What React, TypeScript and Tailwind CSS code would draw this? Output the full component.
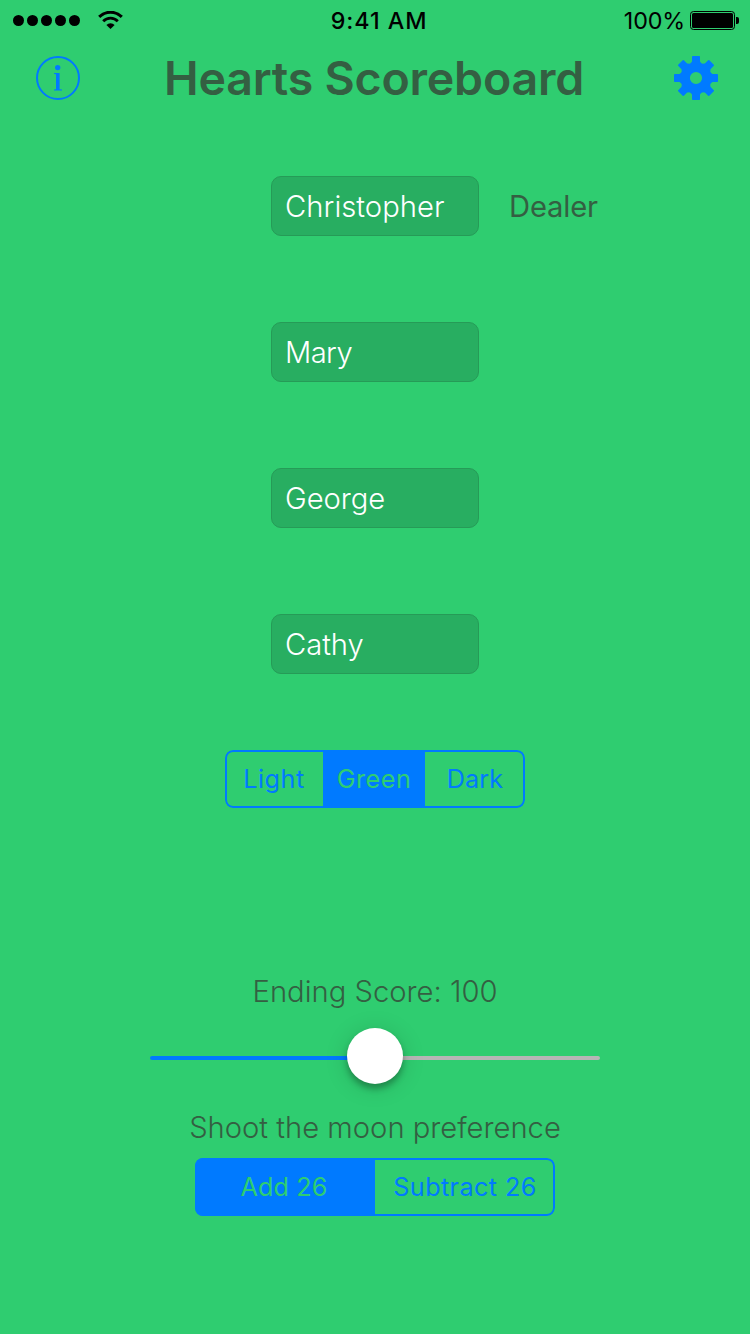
import clsx from "clsx";

function StatusBar() {
  return (
    <div className="flex h-10 w-full items-center justify-between pr-[11px] pl-[13px] text-[23.3px] leading-none text-black">
      <div className="flex w-[306px] items-center gap-[18px] pt-px">
        <div className="flex gap-[3px]">
          {[0, 1, 2, 3, 4].map((i) => (
            <span key={i} className="size-[11px] rounded-full bg-black" />
          ))}
        </div>
        <svg className="mb-px h-[18px] w-[25px]" viewBox="0 0 25 18" fill="none" stroke="#000">
          <path d="M1.2 5.9a16 16 0 0 1 22.6 0" strokeWidth="3" />
          <path d="M5.2 10.3a10.2 10.2 0 0 1 14.6 0" strokeWidth="2.8" />
          <path d="M12.5 17.9 8.4 13.9a5.8 5.8 0 0 1 8.2 0Z" fill="#000" stroke="none" />
        </svg>
      </div>
      <span className="pt-px font-medium tracking-[0.95px] whitespace-nowrap">9:41 AM</span>
      <div className="flex w-[300px] items-center justify-end gap-[5px] pt-px">
        <span className="tracking-[-0.15px]">100%</span>
        <svg className="h-[19px] w-[49px]" viewBox="0 0 49 19">
          <rect x="0.5" y="0.5" width="44" height="18" rx="3" fill="none" stroke="#000" />
          <rect x="2" y="2" width="41" height="15" rx="1.5" fill="#000" />
          <path d="M46 6h1a2 2 0 0 1 2 2v3a2 2 0 0 1-2 2h-1Z" fill="#000" />
        </svg>
      </div>
    </div>
  );
}

function InfoIcon() {
  return (
    <svg className="size-11" viewBox="0 0 44 44">
      <circle cx="22" cy="22" r="21" fill="none" stroke="#007aff" strokeWidth="2" />
      <circle cx="21.7" cy="11.6" r="2.7" fill="#007aff" />
      <path d="M18 17h5.6v16.2l2.4.3V34.4h-8v-.9l2-.3V18.3L18 18Z" fill="#007aff" />
    </svg>
  );
}

function GearIcon() {
  return (
    <svg className="size-11" viewBox="-22 -22 44 44" fill="#007aff">
      <circle r="10.8" fill="none" stroke="#007aff" strokeWidth="9.4" />
      {[0, 45, 90, 135, 180, 225, 270, 315].map((a) => (
        <path key={a} d="M-4-21.2Q-4-22-3.2-22H3.2Q4-22 4-21.2V-16.5L6-14H-6L-4-16.5Z" transform={`rotate(${a})`} />
      ))}
    </svg>
  );
}

interface Segment {
  label: string;
  className: string;
}

function SegmentedControl({ segments, selected, className }: { segments: Segment[]; selected: number; className: string }) {
  return (
    <div className={clsx("relative flex h-[58px] overflow-hidden rounded-[8px] text-[25.2px] leading-none", className)}>
      {segments.map((s, i) => (
        <button
          key={s.label}
          className={clsx(
            "flex items-center justify-center pt-[2px] font-[370] whitespace-nowrap",
            s.className,
            i === selected ? "bg-[#007aff] text-[#2fcd70]" : "text-[#007aff]",
          )}
        >
          {s.label}
        </button>
      ))}
      <span className="pointer-events-none absolute inset-0 rounded-[8px] border-2 border-[#007aff]" />
    </div>
  );
}

const players = [
  { name: "Christopher", tracking: "tracking-[0.05px]", dealer: true },
  { name: "Mary", tracking: "tracking-[-0.6px]", dealer: false },
  { name: "George", tracking: "tracking-[-0.05px]", dealer: false },
  { name: "Cathy", tracking: "tracking-[-0.05px]", dealer: false },
];

export default function App() {
  return (
    <div className="flex h-[1334px] w-[750px] flex-col items-center overflow-hidden bg-[#2fcd70] font-['Inter',sans-serif] text-[#345f42]">
      <StatusBar />
      <header className="flex h-[76px] w-full items-center justify-between pr-8 pl-9">
        <InfoIcon />
        <h1 className="mr-[6px] text-[46.5px] leading-none font-semibold tracking-[-0.2px] whitespace-nowrap">Hearts Scoreboard</h1>
        <GearIcon />
      </header>

      <div className="mt-[60px] flex w-full flex-col gap-[86px] pl-[271px] text-[29.2px] leading-none">
        {players.map((p) => (
          <div key={p.name} className="flex items-center">
            <div className="flex h-[60px] w-[208px] items-center rounded-[10px] border border-[#269b57] bg-[#28ae61] pt-px pl-[13px] font-light text-white">
              <span className={p.tracking}>{p.name}</span>
            </div>
            {p.dealer && <span className="ml-[30px] pt-px font-[370] tracking-[-0.15px]">Dealer</span>}
          </div>
        ))}
      </div>

      <SegmentedControl
        className="mt-[76px] w-[300px]"
        selected={1}
        segments={[
          { label: "Light", className: "w-[98px] tracking-[0.5px]" },
          { label: "Green", className: "w-[102px] tracking-[0.5px]" },
          { label: "Dark", className: "w-[100px] tracking-[0.1px]" },
        ]}
      />

      <p className="mt-[165px] text-[29.2px] leading-[37px] font-light">Ending Score: 100</p>
      <div className="relative mt-[18px] flex h-14 w-[450px] items-center pt-1">
        <span className="h-1 w-1/2 rounded-l-full bg-[#007aff]" />
        <span className="h-1 w-1/2 rounded-r-full bg-[#b6b6b6]" />
        <span className="absolute top-0 left-[197px] size-14 rounded-full bg-white shadow-[0_5px_6px_rgba(0,0,0,0.28),0_3px_24px_rgba(0,0,0,0.14)]" />
      </div>

      <p className="mt-[25px] text-[29.2px] leading-[37px] font-light">Shoot the moon preference</p>
      <SegmentedControl
        className="mt-[12px] w-[360px]"
        selected={0}
        segments={[
          { label: "Add 26", className: "w-1/2 pr-[2px] tracking-[0.1px]" },
          { label: "Subtract 26", className: "w-1/2 tracking-[0.4px]" },
        ]}
      />
    </div>
  );
}
